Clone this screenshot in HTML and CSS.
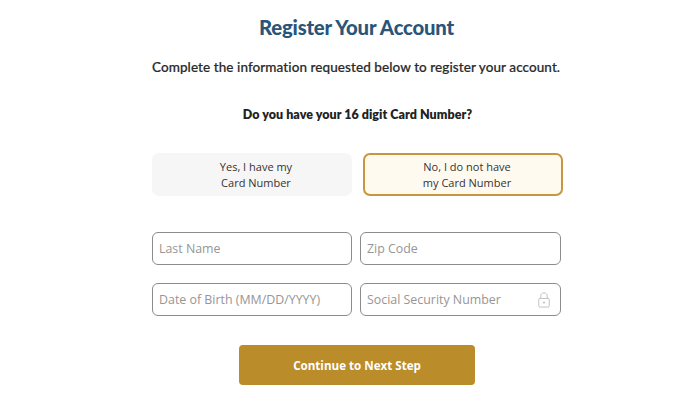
FILE: index.html
```html
<!DOCTYPE html>
<html lang="en">

<head>
    <meta charset="UTF-8">
    <title>Register Your Account</title>
    <link rel="stylesheet" href="styles.css">
</head>

<body>
    <main class="register">
        <h1 class="title">Register Your Account</h1>
        <p class="intro">Complete the information requested below to register your account.</p>
        <p class="question">Do you have your 16 digit Card Number?</p>

        <div class="choices">
            <div class="choice">Yes, I have my<br>Card Number</div>
            <div class="choice choice-active">No, I do not have<br>my Card Number</div>
        </div>

        <div class="fields">
            <div class="field">Last Name</div>
            <div class="field">Zip Code</div>
            <div class="field">Date of Birth (MM/DD/YYYY)</div>
            <div class="field">
                Social Security Number
                <svg class="lock" width="12" height="16" viewBox="0 0 13 17" fill="none" stroke="#bdbdbd" stroke-width="1">
                    <path d="M3 7V4.200C3 2.200 4.500 0.800 6.500 0.800s3.500 1.400 3.500 3.400V7"/>
                    <rect x="0.800" y="6.800" width="11.400" height="9.400" rx="1.500"/>
                    <circle cx="6.500" cy="11.300" r="0.700" fill="#bdbdbd"/>
                </svg>
            </div>
        </div>

        <div class="submit">Continue to Next Step</div>
    </main>
</body>

</html>
```

FILE: styles.css
```css
* {
    box-sizing: border-box;
}

body {
    margin: 0;
    background-color: #fff;
    font-family: "Open Sans", sans-serif;
}

.register {
    width: 411px;
    margin-left: 152px;
    padding-top: 13px;
}

.title {
    margin: 0;
    font-family: "Lato", sans-serif;
    font-size: 20.300px;
    line-height: 28px;
    font-weight: 900;
    letter-spacing: -0.2px;
    color: #2b5578;
    text-align: center;
    padding-right: 2px;
}

.intro {
    margin: 16px 0 0;
    font-family: "Lato", sans-serif;
    font-size: 13.500px;
    line-height: 20px;
    font-weight: 500;
    letter-spacing: 0.08px;
    color: #2a2a2a;
    white-space: nowrap;
    -webkit-text-stroke: 0.2px #2a2a2a;
}

.question {
    margin: 29px 0 0;
    font-family: "Lato", sans-serif;
    font-size: 12.500px;
    line-height: 18px;
    font-weight: 800;
    letter-spacing: 0.05px;
    color: #222;
    text-align: center;
}

.choices {
    display: flex;
    gap: 11px;
    margin-top: 29px;
}

.choice {
    width: 200px;
    height: 43px;
    display: flex;
    align-items: center;
    justify-content: center;
    padding: 1px 0 0 8px;
    text-align: center;
    font-size: 11px;
    line-height: 16px;
    color: #333;
    background-color: #f6f6f6;
    border-radius: 7px;
}

.choice-active {
    background-color: #fffaf0;
    border: 2px solid #c8963e;
}

.fields {
    display: grid;
    grid-template-columns: 200px 201px;
    gap: 18px 8px;
    margin-top: 36px;
}

.field {
    height: 33px;
    display: flex;
    align-items: center;
    justify-content: space-between;
    padding: 0 10px 0 6px;
    font-size: 12.400px;
    color: #969696;
    border: 1px solid #8c8c8c;
    border-radius: 6px;
}

.lock {
    flex: none;
}

.submit {
    width: 236px;
    height: 40px;
    margin: 29px 0 0 87px;
    display: flex;
    align-items: center;
    justify-content: center;
    font-size: 11.600px;
    font-weight: 700;
    color: #fff;
    background-color: #bb8c2a;
    border-radius: 4px;
}
```
